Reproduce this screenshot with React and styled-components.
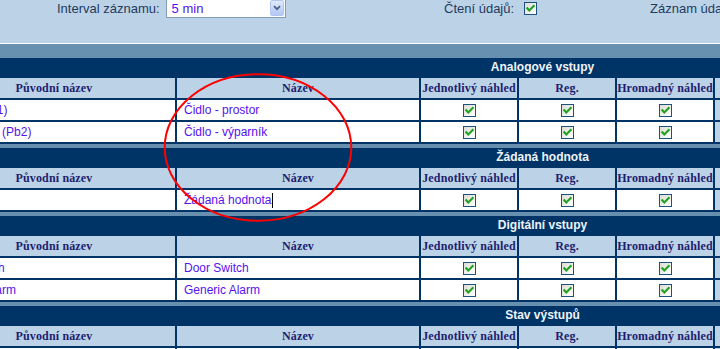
import React from 'react';
import styled, { createGlobalStyle } from 'styled-components';

const C = {
  navy: '#003466',
  mid: '#6790b0',
  light: '#bcd2e6',
  ink: '#1e1e70',
  link: '#5511ee',
  label: '#1f3b5e',
};

const Global = createGlobalStyle`
  html, body { margin: 0; padding: 0; overflow: hidden; background: ${C.light}; }
  #root { width: 720px; height: 349px; overflow: hidden; }
`;

const Page = styled.div`
  position: relative;
  width: 1223px;
  margin: -4px 0 0 -69px;
  font-family: "Liberation Sans", Arial, sans-serif;
`;

const TopBar = styled.div`
  box-sizing: border-box;
  height: 48px;
  padding: 2px 0 0 126px;
  background: ${C.light};
  border-bottom: 1px solid #ffffff;
  display: grid;
  grid-template-columns: 387px 206px auto;
  align-items: start;
`;

const Field = styled.div`
  display: flex;
  align-items: center;
  height: 20px;
  gap: ${(p) => p.$gap}px;
`;

const Label = styled.span`
  font-size: 13px;
  color: ${C.label};
  white-space: nowrap;
`;

const Select = styled.div`
  box-sizing: border-box;
  width: 120px;
  height: 20px;
  border: 1px solid #7f9db9;
  background: #fff;
  display: flex;
  align-items: center;
  padding: 0 1px 0 5px;
  font-size: 13px;
  color: ${C.link};
`;

const SelectArrow = styled.span`
  box-sizing: border-box;
  margin-left: auto;
  width: 14px;
  height: 16px;
  border: 1px solid #b3c6ee;
  border-radius: 2px;
  background: linear-gradient(180deg, #e2eafc 0%, #c3d4fa 55%, #b4c8f3 100%);
  display: flex;
  align-items: center;
  justify-content: center;
`;

const Box = styled.span`
  box-sizing: border-box;
  display: inline-flex;
  width: 13px;
  height: 13px;
  border: 1px solid #1c5180;
  background: linear-gradient(135deg, #dcdcd5 0%, #f2f2ee 60%, #ffffff 100%);
`;

const Check = () => (
  <Box>
    <svg width="11" height="11" viewBox="0 0 11 11">
      <path d="M2.3 5.2 L4.3 7.4 L8.7 2.9" fill="none" stroke="#21a121" strokeWidth="2.1" strokeLinecap="square" />
    </svg>
  </Box>
);

const Sections = styled.div`
  background: ${C.mid};
  padding-top: 14px;
  display: flex;
  flex-direction: column;
  gap: 4px;
`;

const Section = styled.div`
  display: grid;
  grid-template-columns: 242px 242px repeat(6, 96px) 143px;
  grid-template-rows: 18px;
  grid-auto-rows: 20px;
  gap: 2px;
  padding: 0 2px 2px;
  background: ${C.navy};
`;

const Title = styled.div`
  grid-column: 1 / -1;
  height: 18px;
  line-height: 19px;
  text-align: center;
  color: #eef3f8;
  font-weight: bold;
  font-size: 12px;
`;

const HeadCell = styled.div`
  background: ${C.light};
  display: flex;
  align-items: center;
  justify-content: center;
  font-family: "Liberation Serif", "Times New Roman", serif;
  font-weight: bold;
  font-size: 12px;
  letter-spacing: 0.15px;
  color: ${C.ink};
  white-space: nowrap;
  overflow: hidden;
`;

const Cell = styled.div`
  background: ${(p) => (p.$muted ? C.light : '#ffffff')};
  display: flex;
  align-items: center;
  justify-content: ${(p) => (p.$center ? 'center' : 'flex-start')};
  padding: 0 7px;
  font-size: 12px;
  color: ${C.link};
  white-space: nowrap;
  overflow: hidden;
`;

const Caret = styled.span`
  display: inline-block;
  width: 1px;
  height: 15px;
  margin-left: 1px;
  background: #000;
`;

const Annotation = styled.svg`
  position: absolute;
  left: 227px;
  top: 72px;
  pointer-events: none;
`;

const sections = [
  { title: 'Analogové vstupy', rows: [['Sonda (Pb1)', 'Čidlo - prostor'], ['Evaporator (Pb2)', 'Čidlo - výparník']] },
  { title: 'Žádaná hodnota', rows: [['Setpoint', 'Žádaná hodnota', true]] },
  { title: 'Digitální vstupy', rows: [['Door Switch', 'Door Switch'], ['Generic Alarm', 'Generic Alarm']] },
  { title: 'Stav výstupů', rows: [['Compressor', 'Kompresor']] },
];

const heads = ['Původní název', 'Název', 'Jednotlivý náhled', 'Reg.', 'Hromadný náhled', '', '', '', ''];

export default function App() {
  return (
    <>
      <Global />
      <Page>
        <TopBar>
          <Field $gap={6}>
            <Label>Interval záznamu:</Label>
            <Select>
              5 min
              <SelectArrow>
                <svg width="8" height="6" viewBox="0 0 8 6">
                  <path d="M1 1.2 L4 4.2 L7 1.2" fill="none" stroke="#4d6185" strokeWidth="1.8" />
                </svg>
              </SelectArrow>
            </Select>
          </Field>
          <Field $gap={10}>
            <Label>Čtení údajů:</Label>
            <Check />
          </Field>
          <Field $gap={10}>
            <Label>Záznam údajů:</Label>
            <Check />
          </Field>
        </TopBar>
        <Sections>
          {sections.map((s) => (
            <Section key={s.title}>
              <Title>{s.title}</Title>
              {heads.map((h, i) => (
                <HeadCell key={i}>{h}</HeadCell>
              ))}
              {s.rows.map(([orig, name, caret]) => (
                <React.Fragment key={orig}>
                  <Cell>{orig}</Cell>
                  <Cell>
                    {name}
                    {caret && <Caret />}
                  </Cell>
                  <Cell $center><Check /></Cell>
                  <Cell $center><Check /></Cell>
                  <Cell $center><Check /></Cell>
                  <Cell $muted />
                  <Cell $muted />
                  <Cell $muted />
                  <Cell $muted />
                </React.Fragment>
              ))}
            </Section>
          ))}
        </Sections>
        <Annotation width="200" height="160" viewBox="0 0 200 160">
          <ellipse cx="100" cy="79.5" rx="93.3" ry="73.3" fill="none" stroke="#ff0000" strokeWidth="2" />
        </Annotation>
      </Page>
    </>
  );
}
